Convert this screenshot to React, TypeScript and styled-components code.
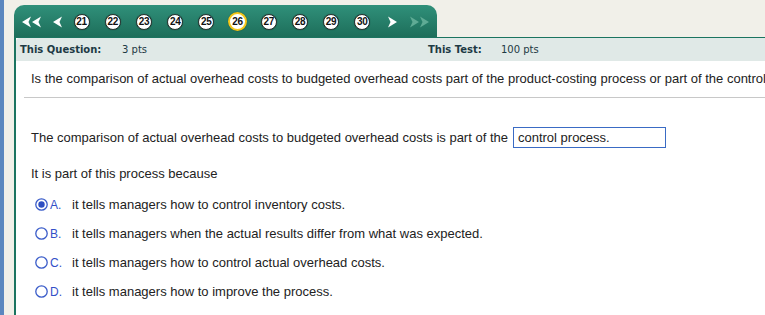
import styled, { createGlobalStyle } from 'styled-components';

const GlobalStyle = createGlobalStyle`
  html, body {
    margin: 0;
    padding: 0;
    background: #f1f0e9;
  }
  body {
    width: 765px;
    height: 315px;
    overflow: hidden;
  }
`;

const Page = styled.div`
  display: flex;
  height: 315px;
`;

const Strip = styled.div`
  width: 4px;
  flex-shrink: 0;
  background: #5b87bf;
`;

const Main = styled.div`
  flex: 1;
  display: flex;
  flex-direction: column;
  padding: 5px 0 0 10px;
  min-width: 0;
`;

const Tab = styled.div`
  width: 423px;
  height: 32px;
  box-sizing: border-box;
  border-radius: 10px 10px 0 0;
  background: linear-gradient(#30907a, #1d6e5a);
  display: flex;
  align-items: center;
  padding: 1px 0 0 8px;
`;

const Arrow = styled.span<{ $gap: number }>`
  display: flex;
  margin-left: ${({ $gap }) => $gap}px;
`;

const Slot = styled.span`
  width: 31.2px;
  display: flex;
  justify-content: center;
  align-items: center;
`;

const Bubble = styled.span<{ $current?: boolean }>`
  width: ${({ $current }) => ($current ? 15 : 14)}px;
  height: ${({ $current }) => ($current ? 15 : 14)}px;
  border-radius: 50%;
  background: #fff;
  border: ${({ $current }) =>
    $current ? '2px solid #f4c81c' : '1px solid #24332f'};
  box-shadow: 0 0 1px rgba(0, 0, 0, 0.5);
  display: flex;
  align-items: center;
  justify-content: center;
  font-family: 'Liberation Sans', Arial, sans-serif;
  font-weight: 700;
  font-size: 10px;
  color: #111;
  letter-spacing: -0.3px;
`;

const Panel = styled.div`
  flex: 1;
  background: #fff;
  border-left: 2px solid #1b7460;
  border-top: 1px solid #1b7460;
  display: flex;
  flex-direction: column;
  min-width: 0;
`;

const InfoBar = styled.div`
  height: 23px;
  background: #e0e9e7;
  border-top-left-radius: 4px;
  display: flex;
  align-items: center;
  padding-left: 4px;
  font-family: 'DejaVu Sans', Verdana, sans-serif;
  font-size: 10px;
  color: #1d3a44;
`;

const InfoLabel = styled.span<{ $width: number }>`
  width: ${({ $width }) => $width}px;
  font-weight: 700;
`;

const InfoValue = styled.span<{ $width?: number }>`
  width: ${({ $width }) => ($width ? `${$width}px` : 'auto')};
`;

const Body = styled.div`
  font-family: 'Liberation Sans', Arial, sans-serif;
  font-size: 13px;
  color: #222;
`;

const Question = styled.div`
  padding: 10px 0 0 15px;
  line-height: 15px;
  white-space: nowrap;
  overflow: hidden;
`;

const Rule = styled.div`
  height: 1px;
  background: #c8c8c8;
  margin: 11px 0 0 8px;
`;

const Sentence = styled.div`
  display: flex;
  align-items: center;
  margin: 29px 0 0 15px;
  gap: 5px;
  white-space: nowrap;
`;

const Answer = styled.span`
  width: 153px;
  height: 21px;
  box-sizing: border-box;
  border: 1px solid #3a6bc4;
  display: flex;
  align-items: center;
  padding-left: 4px;
`;

const Prompt = styled.div`
  margin: 18px 0 0 15px;
  line-height: 15px;
`;

const Options = styled.div`
  margin: 9px 0 0 19px;
  display: flex;
  flex-direction: column;
`;

const Option = styled.div`
  height: 29px;
  display: flex;
  align-items: center;
`;

const Letter = styled.span`
  width: 22px;
  margin-left: 2px;
  color: #3350c8;
  font-size: 12px;
`;

const ChevronPair = ({ color }: { color: string }) => (
  <svg width="21" height="12" viewBox="0 0 21 12">
    <path d="M0 6 L9 0.5 L6.5 6 L9 11.5 Z" fill={color} />
    <path d="M10 6 L19 0.5 L16.5 6 L19 11.5 Z" fill={color} />
  </svg>
);

const Chevron = ({ flip, color }: { flip?: boolean; color: string }) => (
  <svg width="11" height="12" viewBox="0 0 11 12">
    <path
      d="M1 6 L10 0.5 L7.5 6 L10 11.5 Z"
      fill={color}
      transform={flip ? 'translate(11 0) scale(-1 1)' : undefined}
    />
  </svg>
);

const Radio = ({ checked }: { checked?: boolean }) => (
  <svg width="13" height="13" viewBox="0 0 13 13">
    <circle cx="6.5" cy="6.5" r="5.7" fill="#fff" stroke="#3a5cc9" strokeWidth="1.3" />
    {checked && <circle cx="6.5" cy="6.5" r="3.2" fill="#2f4fc2" />}
  </svg>
);

const numbers = [21, 22, 23, 24, 25, 26, 27, 28, 29, 30];

const choices = [
  { key: 'A', text: 'it tells managers how to control inventory costs.', checked: true },
  { key: 'B', text: 'it tells managers when the actual results differ from what was expected.' },
  { key: 'C', text: 'it tells managers how to control actual overhead costs.' },
  { key: 'D', text: 'it tells managers how to improve the process.' },
];

export default function App() {
  return (
    <Page>
      <GlobalStyle />
      <Strip />
      <Main>
        <Tab>
          <Arrow $gap={0}>
            <ChevronPair color="#fff" />
          </Arrow>
          <Arrow $gap={9}>
            <Chevron color="#fff" />
          </Arrow>
          <Arrow $gap={3}>
            {numbers.map((n) => (
              <Slot key={n}>
                <Bubble $current={n === 26}>{n}</Bubble>
              </Slot>
            ))}
          </Arrow>
          <Arrow $gap={9}>
            <Chevron flip color="#fff" />
          </Arrow>
          <Arrow $gap={10}>
            <svg width="21" height="12" viewBox="0 0 21 12">
              <g transform="translate(21 0) scale(-1 1)">
                <path d="M0 6 L9 0.5 L6.5 6 L9 11.5 Z" fill="#5fab95" />
                <path d="M10 6 L19 0.5 L16.5 6 L19 11.5 Z" fill="#5fab95" />
              </g>
            </svg>
          </Arrow>
        </Tab>
        <Panel>
          <InfoBar>
            <InfoLabel $width={102}>This Question:</InfoLabel>
            <InfoValue $width={306}>3 pts</InfoValue>
            <InfoLabel $width={73}>This Test:</InfoLabel>
            <InfoValue>100 pts</InfoValue>
          </InfoBar>
          <Body>
            <Question>
              Is the comparison of actual overhead costs to budgeted overhead costs part of the
              product-costing process or part of the control process?
            </Question>
            <Rule />
            <Sentence>
              The comparison of actual overhead costs to budgeted overhead costs is part of the
              <Answer>control process.</Answer>
            </Sentence>
            <Prompt>It is part of this process because</Prompt>
            <Options>
              {choices.map((c) => (
                <Option key={c.key}>
                  <Radio checked={c.checked} />
                  <Letter>{c.key}.</Letter>
                  {c.text}
                </Option>
              ))}
            </Options>
          </Body>
        </Panel>
      </Main>
    </Page>
  );
}
